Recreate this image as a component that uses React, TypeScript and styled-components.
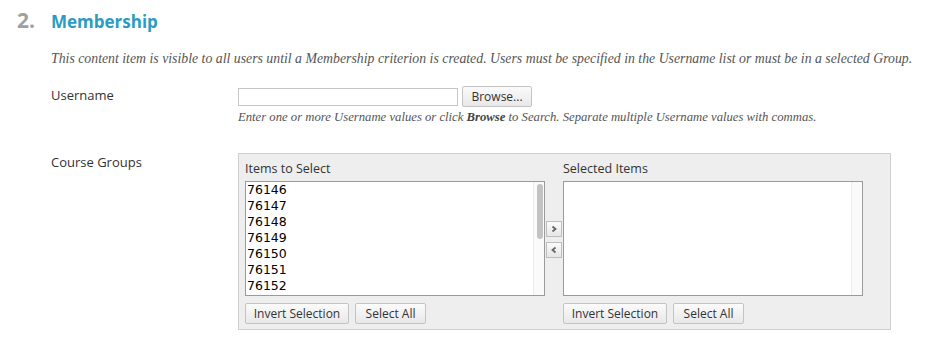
import React from "react";
import styled, { createGlobalStyle } from "styled-components";

const Global = createGlobalStyle`
  body {
    margin: 0;
    background: #fff;
    font-family: "Open Sans", "DejaVu Sans", sans-serif;
    color: #333;
  }
`;

const Page = styled.div`
  width: 937px;
  height: 357px;
  overflow: hidden;
`;

const Heading = styled.div`
  display: flex;
  align-items: baseline;
  padding: 6px 0 0 17px;
  height: 30px;
`;

const Step = styled.span`
  width: 34px;
  font-size: 21px;
  font-weight: 700;
  color: #a0a0a0;
`;

const Title = styled.h2`
  margin: 0;
  font-size: 17px;
  font-weight: 700;
  color: #2a9cc4;
`;

const Description = styled.p`
  margin: 15px 0 0 51px;
  font-family: "Liberation Serif", "DejaVu Serif", serif;
  font-style: italic;
  font-size: 13.8px;
  color: #555;
`;

const Row = styled.div<{ $top: number }>`
  display: flex;
  margin-top: ${p => p.$top}px;
`;

const Label = styled.div`
  width: 187px;
  padding-left: 51px;
  font-size: 13px;
  color: #333;
  line-height: 18px;
`;

const Field = styled.div`
  display: flex;
  flex-direction: column;
`;

const InputLine = styled.div`
  display: flex;
  align-items: center;
  gap: 4px;
`;

const TextInput = styled.input`
  width: 220px;
  height: 18px;
  box-sizing: border-box;
  border: 1px solid #c6c6c6;
  margin: 0;
  padding: 0 3px;
`;

const Button = styled.button<{ $w: number }>`
  width: ${p => p.$w}px;
  height: 21px;
  margin: 0;
  padding: 0;
  border: 1px solid #c4c4c4;
  border-radius: 2px;
  background: linear-gradient(#fbfbfb, #e8e8e8);
  font-family: "Open Sans", "DejaVu Sans", sans-serif;
  font-size: 12px;
  color: #333;
`;

const Help = styled.div`
  margin-top: 3px;
  font-family: "Liberation Serif", "DejaVu Serif", serif;
  font-style: italic;
  font-size: 12.7px;
  color: #555;
  b { font-weight: 700; color: #444; }
`;

const Panel = styled.div`
  width: 653px;
  height: 177px;
  box-sizing: border-box;
  border: 1px solid #cfcfcf;
  background: #eeeeee;
  padding: 6px 0 0 6px;
  display: flex;
  align-items: flex-start;
`;

const Column = styled.div`
  display: flex;
  flex-direction: column;
`;

const ColumnTitle = styled.div`
  font-size: 12.5px;
  color: #333;
  height: 20px;
  line-height: 16px;
  padding-top: 1px;
`;

const ListBox = styled.div`
  width: 300px;
  height: 115px;
  box-sizing: border-box;
  border: 1px solid #9a9a9a;
  background: #fff;
  display: flex;
  overflow: hidden;
`;

const Items = styled.div`
  flex: 1;
  padding: 0 0 0 1px;
  font-family: "DejaVu Sans", "Liberation Sans", sans-serif;
  font-size: 12.5px;
  line-height: 16px;
  color: #000;
`;

const Track = styled.div`
  width: 11px;
  background: #fafafa;
  border-left: 1px solid #ececec;
  padding: 2px 0 0 3px;
  box-sizing: border-box;
`;

const Thumb = styled.div`
  width: 6px;
  height: 55px;
  border-radius: 3px;
  background: #c2c2c2;
`;

const Buttons = styled.div`
  display: flex;
  gap: 6px;
  margin-top: 7px;
`;

const Arrows = styled.div`
  display: flex;
  flex-direction: column;
  gap: 5px;
  margin: 61px 1px 0 1px;
`;

const ArrowButton = styled.div`
  width: 16px;
  height: 16px;
  box-sizing: border-box;
  border: 1px solid #bdbdbd;
  background: linear-gradient(#fbfbfb, #e6e6e6);
  display: flex;
  align-items: center;
  justify-content: center;
`;

const Chevron = ({ dir }: { dir: "left" | "right" }) => (
  <svg width="8" height="8" viewBox="0 0 8 8">
    <path
      d={dir === "right" ? "M2.5 1.5 L5.5 4 L2.5 6.5" : "M5.5 1.5 L2.5 4 L5.5 6.5"}
      fill="none"
      stroke="#666"
      strokeWidth="1.8"
    />
  </svg>
);

const groups = ["76146", "76147", "76148", "76149", "76150", "76151", "76152"];

const App = () => (
  <Page>
    <Global />
    <Heading>
      <Step>2.</Step>
      <Title>Membership</Title>
    </Heading>
    <Description>
      This content item is visible to all users until a Membership criterion is created. Users must be specified in the Username list or must be in a selected Group.
    </Description>
    <Row $top={19}>
      <Label>Username</Label>
      <Field>
        <InputLine>
          <TextInput type="text" />
          <Button $w={70}>Browse...</Button>
        </InputLine>
        <Help>
          Enter one or more Username values or click <b>Browse</b> to Search. Separate multiple Username values with commas.
        </Help>
      </Field>
    </Row>
    <Row $top={28}>
      <Label>Course Groups</Label>
      <Panel>
        <Column>
          <ColumnTitle>Items to Select</ColumnTitle>
          <ListBox>
            <Items>
              {groups.map(g => (
                <div key={g}>{g}</div>
              ))}
            </Items>
            <Track>
              <Thumb />
            </Track>
          </ListBox>
          <Buttons>
            <Button $w={104}>Invert Selection</Button>
            <Button $w={71}>Select All</Button>
          </Buttons>
        </Column>
        <Arrows>
          <ArrowButton><Chevron dir="right" /></ArrowButton>
          <ArrowButton><Chevron dir="left" /></ArrowButton>
        </Arrows>
        <Column>
          <ColumnTitle>Selected Items</ColumnTitle>
          <ListBox>
            <Items />
            <Track />
          </ListBox>
          <Buttons>
            <Button $w={104}>Invert Selection</Button>
            <Button $w={71}>Select All</Button>
          </Buttons>
        </Column>
      </Panel>
    </Row>
  </Page>
);

export default App;
